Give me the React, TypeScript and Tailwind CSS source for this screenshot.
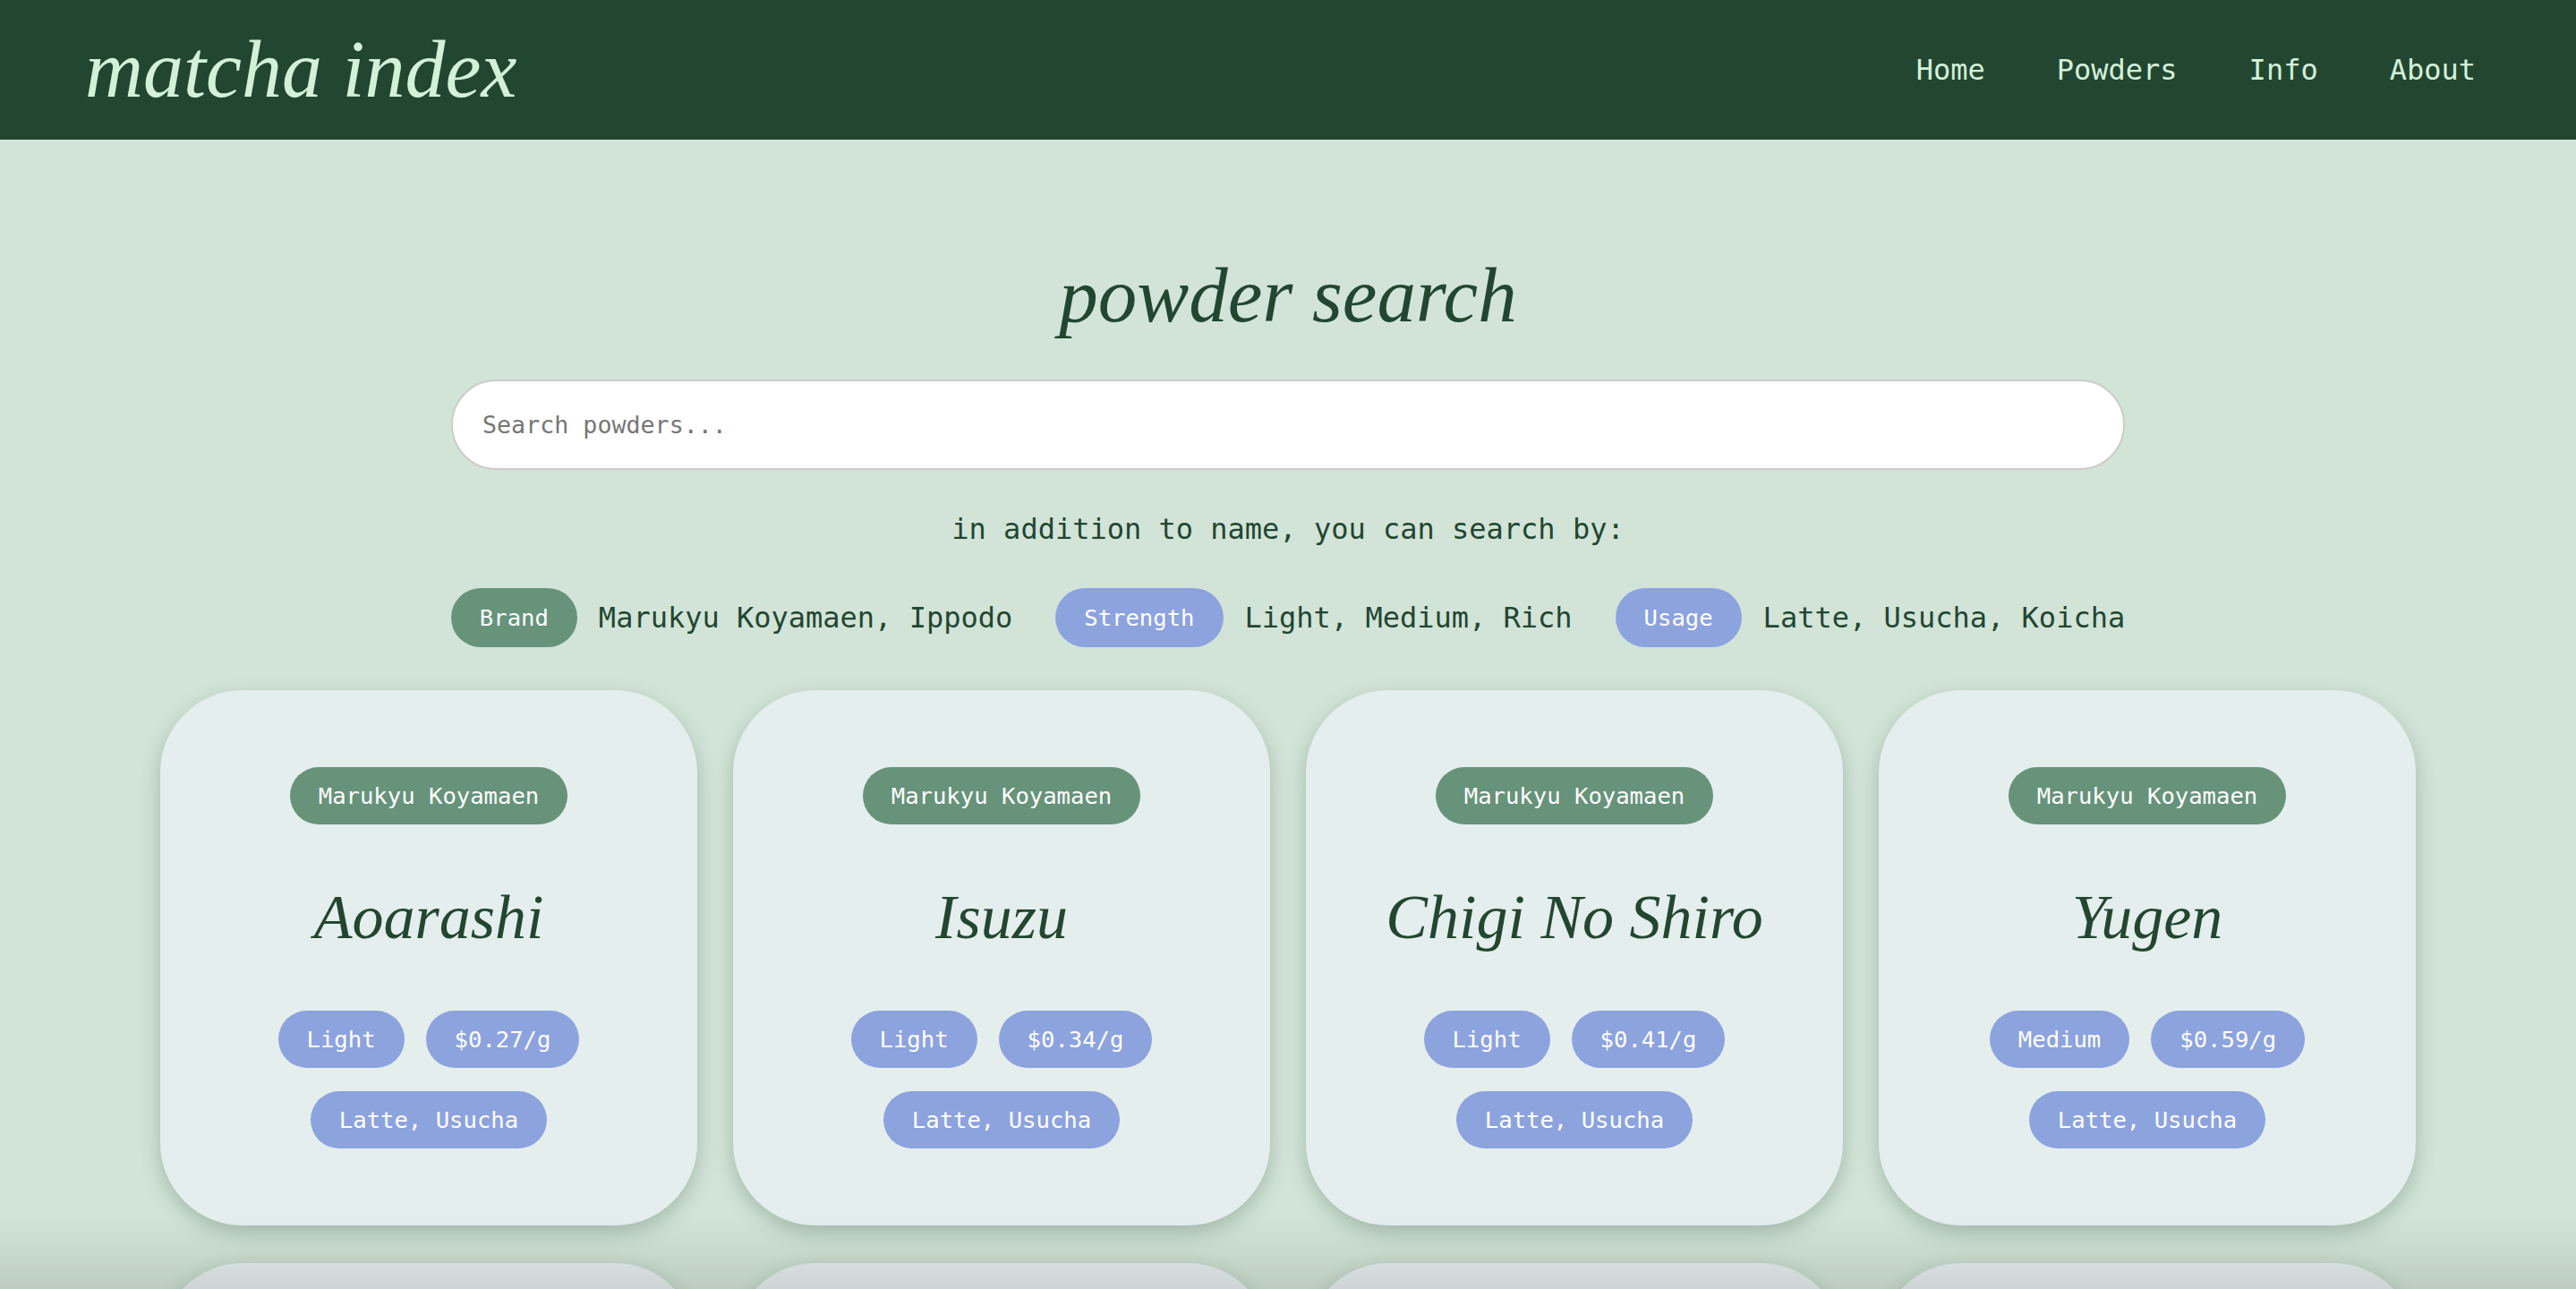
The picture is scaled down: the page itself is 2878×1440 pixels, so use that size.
import React from 'react';

interface Powder {
  brand: string;
  name: string;
  strength: string;
  price: string;
  usage: string;
}

const powders: Powder[] = [
  { brand: 'Marukyu Koyamaen', name: 'Aoarashi', strength: 'Light', price: '$0.27/g', usage: 'Latte, Usucha' },
  { brand: 'Marukyu Koyamaen', name: 'Isuzu', strength: 'Light', price: '$0.34/g', usage: 'Latte, Usucha' },
  { brand: 'Marukyu Koyamaen', name: 'Chigi No Shiro', strength: 'Light', price: '$0.41/g', usage: 'Latte, Usucha' },
  { brand: 'Marukyu Koyamaen', name: 'Yugen', strength: 'Medium', price: '$0.59/g', usage: 'Latte, Usucha' },
  { brand: 'Marukyu Koyamaen', name: 'Wako', strength: 'Medium', price: '$0.64/g', usage: 'Usucha' },
  { brand: 'Marukyu Koyamaen', name: 'Kinrin', strength: 'Rich', price: '$0.80/g', usage: 'Usucha, Koicha' },
  { brand: 'Ippodo', name: 'Sayaka', strength: 'Medium', price: '$0.52/g', usage: 'Latte, Usucha' },
  { brand: 'Ippodo', name: 'Ummon', strength: 'Rich', price: '$0.95/g', usage: 'Usucha, Koicha' },
];

const mono = "font-['DejaVu_Sans_Mono','Liberation_Mono',monospace]";
const serif = "font-['Liberation_Serif','Times_New_Roman',serif] italic";

function Pill({ children, brand }: { children: React.ReactNode; brand?: boolean }) {
  return (
    <span
      className={`${mono} inline-flex h-[64px] items-center rounded-full px-[32px] text-[25.6px] text-white ${
        brand ? 'bg-[#66937a]' : 'bg-[#8da3de]'
      }`}
    >
      {children}
    </span>
  );
}

function PowderCard({ powder }: { powder: Powder }) {
  return (
    <div className="flex h-[598px] flex-col items-center justify-center rounded-[92px] bg-[#e4eeed] shadow-[0_8px_22px_rgba(30,60,40,0.25)]">
      <Pill brand>{powder.brand}</Pill>
      <h3 className={`${serif} my-[62px] text-[70px] leading-[84px] text-[#234631]`}>{powder.name}</h3>
      <div className="flex flex-col items-center gap-[26px]">
        <div className="flex gap-[24px]">
          <Pill>{powder.strength}</Pill>
          <Pill>{powder.price}</Pill>
        </div>
        <Pill>{powder.usage}</Pill>
      </div>
    </div>
  );
}

function App() {
  return (
    <div className="min-h-screen bg-[#d2e4d8]">
      <header className="flex h-[156px] items-center justify-between bg-[#234631] pl-[95px] pr-[112px]">
        <h1 className={`${serif} text-[90px] leading-none text-[#d3f1d9]`}>matcha index</h1>
        <nav className={`${mono} flex gap-[80px] text-[32px] text-[#d3f1d9]`}>
          <a>Home</a>
          <a>Powders</a>
          <a>Info</a>
          <a>About</a>
        </nav>
      </header>

      <main className="flex flex-col items-center">
        {/* Search section */}
        <h2 className={`${serif} mt-[121px] text-[87px] leading-[106px] text-[#234631]`}>powder search</h2>
        <input
          type="text"
          placeholder="Search powders..."
          className={`${mono} mt-[41px] h-[101px] w-[1870px] rounded-full border-2 border-[#cccccc] bg-white px-[33px] text-[26.67px] text-[#234631] outline-none placeholder:text-[#767676]`}
        />
        <p className={`${mono} mt-[47px] text-[32px] leading-[38px] text-[#234631]`}>
          in addition to name, you can search by:
        </p>
        <div className={`${mono} mt-[47px] flex items-center gap-[48px] text-[32px] text-[#234631]`}>
          <div className="flex items-center gap-[24px]">
            <span className="inline-flex h-[66px] items-center rounded-full bg-[#66937a] px-[32px] text-[25.6px] text-white">Brand</span>
            <span>Marukyu Koyamaen, Ippodo</span>
          </div>
          <div className="flex items-center gap-[24px]">
            <span className="inline-flex h-[66px] items-center rounded-full bg-[#8da3de] px-[32px] text-[25.6px] text-white">Strength</span>
            <span>Light, Medium, Rich</span>
          </div>
          <div className="flex items-center gap-[24px]">
            <span className="inline-flex h-[66px] items-center rounded-full bg-[#8da3de] px-[32px] text-[25.6px] text-white">Usage</span>
            <span>Latte, Usucha, Koicha</span>
          </div>
        </div>

        {/* Results */}
        <div className="mt-[48px] mb-[80px] grid grid-cols-[repeat(4,600px)] gap-x-[40px] gap-y-[42px]">
          {powders.map((p) => (
            <PowderCard key={p.name} powder={p} />
          ))}
        </div>
      </main>

      <div className="pointer-events-none fixed inset-x-0 bottom-0 h-[80px] bg-gradient-to-b from-transparent to-black/10" />
    </div>
  );
}

export default App;
